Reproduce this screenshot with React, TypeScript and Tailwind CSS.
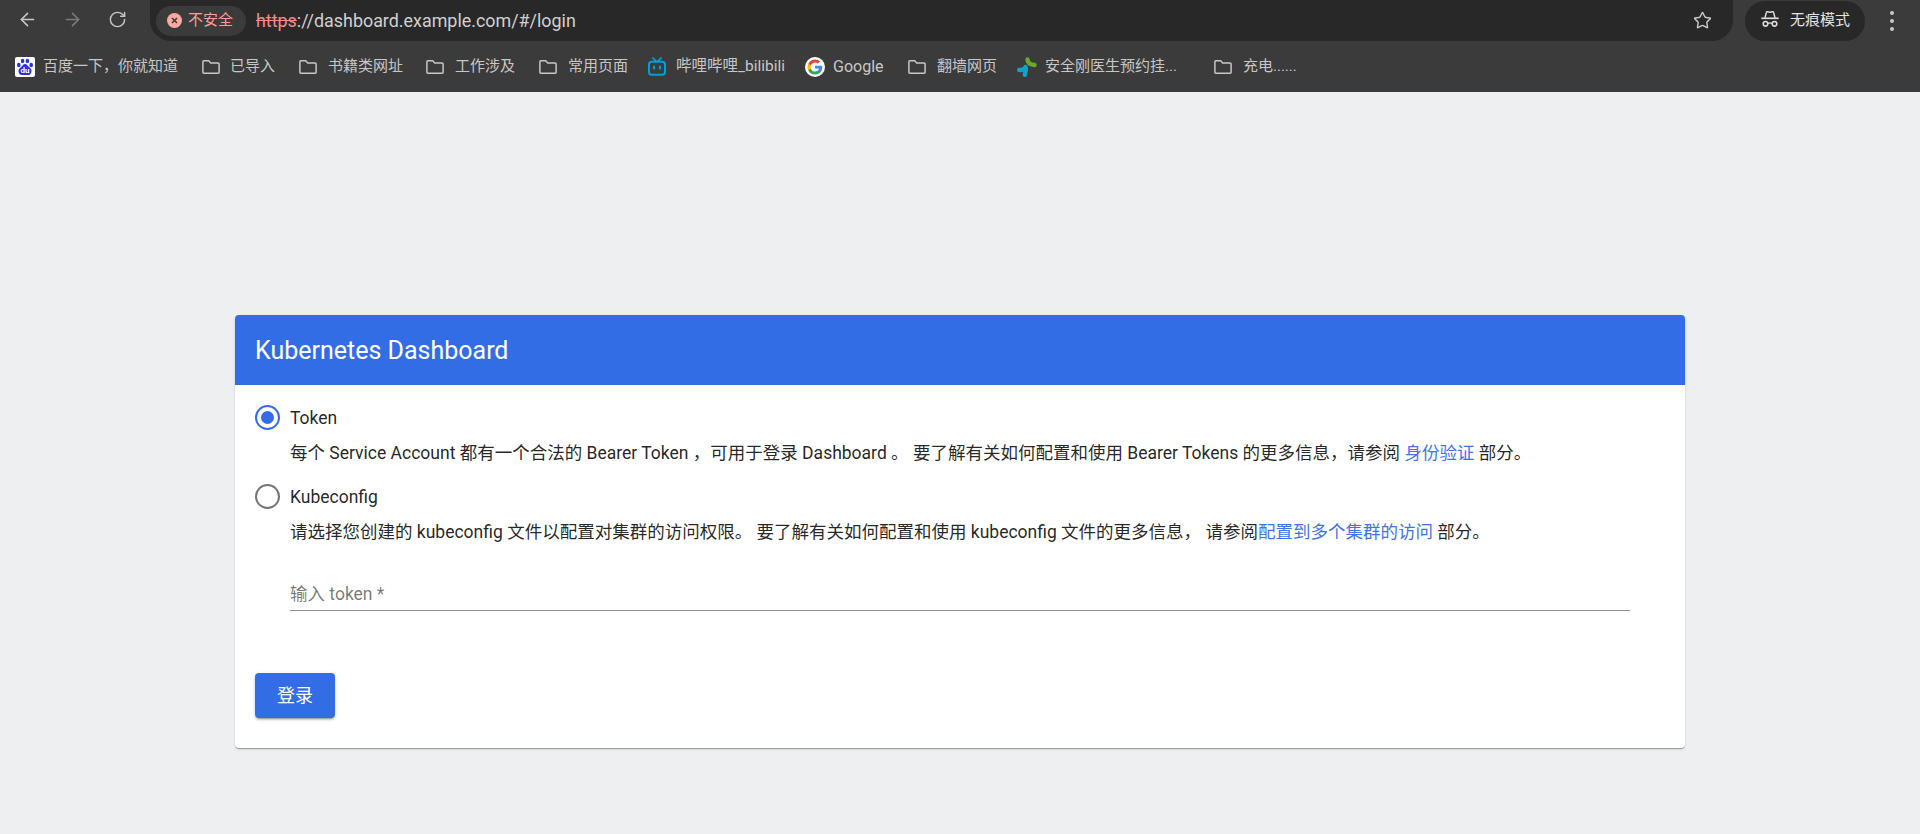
import { ArrowLeft, ArrowRight, RotateCw, Star } from "lucide-react";
import type { ReactNode } from "react";

const CJK = "font-['Roboto','Noto_Sans_CJK_SC',sans-serif]";

function FolderIcon() {
  return (
    <svg width="20" height="20" viewBox="0 0 20 20" fill="none" className="shrink-0">
      <path
        d="M2.800 3.800h4.900l2 2.200h7.500c.5 0 .9.400.9.900v8.400c0 .5-.4.900-.9.900H2.800c-.5 0-.9-.4-.9-.9V4.700c0-.5.400-.9.900-.9z"
        stroke="#c7c7c7"
        strokeWidth="1.500"
      />
    </svg>
  );
}

function BaiduIcon() {
  return (
    <svg width="20" height="20" viewBox="0 0 20 20" className="shrink-0">
      <rect width="20" height="20" rx="2" fill="#fff" />
      <g fill="#2932e1">
        <ellipse cx="3.800" cy="8" rx="1.800" ry="2.200" />
        <ellipse cx="7.600" cy="3.900" rx="1.800" ry="2.200" />
        <ellipse cx="12.400" cy="3.900" rx="1.800" ry="2.200" />
        <ellipse cx="16.200" cy="8" rx="1.800" ry="2.200" />
        <path d="M10 7c2 0 2.800 2 4.400 3.200 1.600 1.200 2.100 2.400 2.100 4 0 2.400-1.800 3.900-3.600 3.900H7c-1.900 0-3.500-1.500-3.500-3.800 0-1.700.8-2.900 2.300-4.100C7.400 9 8 7 10 7z" />
      </g>
      <text x="10" y="16.300" textAnchor="middle" fontSize="8" fontWeight="700" fill="#fff" fontFamily="Roboto, sans-serif">
        du
      </text>
    </svg>
  );
}

function BilibiliIcon() {
  return (
    <svg width="20" height="20" viewBox="0 0 20 20" fill="none" className="shrink-0">
      <path d="M5 1l3 3.200M13 1l-3 3.200" stroke="#00a1d6" strokeWidth="1.800" strokeLinecap="round" />
      <rect x="1" y="4.700" width="16" height="13" rx="2.800" stroke="#00a1d6" strokeWidth="2" />
      <path d="M6 9.700v1.800M12 9.700v1.800" stroke="#00a1d6" strokeWidth="2.200" strokeLinecap="round" />
    </svg>
  );
}

function GoogleIcon() {
  return (
    <svg width="20" height="20" viewBox="0 0 20 20" className="shrink-0">
      <circle cx="10" cy="10" r="10" fill="#fff" />
      <g transform="translate(2.500 2.500) scale(.625)">
        <path fill="#4285f4" d="M23.500 12.300c0-.8-.1-1.600-.2-2.300H12v4.500h6.500c-.3 1.500-1.100 2.800-2.400 3.600v3h3.800c2.300-2 3.600-5.100 3.600-8.800z" />
        <path fill="#34a853" d="M12 24c3.200 0 6-1.100 7.900-2.900l-3.800-3c-1.100.7-2.400 1.200-4.100 1.200-3.100 0-5.800-2.100-6.700-5H1.300v3.100C3.300 21.300 7.300 24 12 24z" />
        <path fill="#fbbc05" d="M5.300 14.300c-.5-1.500-.5-3.100 0-4.600V6.600h-4C-.4 9.900-.4 14.100 1.300 17.400l4-3.100z" />
        <path fill="#ea4335" d="M12 4.700c1.800 0 3.300.6 4.600 1.800l3.400-3.400C17.900 1.200 15.200 0 12 0 7.300 0 3.300 2.700 1.300 6.600l4 3.100c.9-2.900 3.600-5 6.700-5z" />
      </g>
    </svg>
  );
}

function ClinicIcon() {
  return (
    <svg width="20" height="20" viewBox="0 0 20 20" fill="none" className="shrink-0">
      <path d="M10.500 2.500C10.500 6 13 7.500 17.500 8" stroke="#6aa92a" strokeWidth="4.400" strokeLinecap="round" />
      <path d="M2.200 13C5 13 8 12.300 8.500 10M8.800 11C9.200 13.500 8.200 15.500 7.800 17.800" stroke="#0ea5c8" strokeWidth="4.400" strokeLinecap="round" />
    </svg>
  );
}

function IncognitoIcon() {
  return (
    <svg width="18" height="18" viewBox="0 0 18 18" fill="none" className="mb-[3px] shrink-0">
      <path d="M4 7.800L5.400 2.400c.1-.5.500-.8 1-.7L9 2.200l2.600-.5c.5-.1.900.2 1 .7L14 7.800" stroke="#dcdcdc" strokeWidth="1.500" />
      <path d="M.3 8.300h17.400" stroke="#dcdcdc" strokeWidth="1.700" />
      <circle cx="4.500" cy="13.800" r="2.300" stroke="#dcdcdc" strokeWidth="1.600" />
      <circle cx="13.500" cy="13.800" r="2.300" stroke="#dcdcdc" strokeWidth="1.600" />
      <path d="M6.800 13.300c1.400-.6 3-.6 4.400 0" stroke="#dcdcdc" strokeWidth="1.400" />
    </svg>
  );
}

function WarningIcon() {
  return (
    <svg width="15" height="15" viewBox="0 0 15 15" className="shrink-0">
      <circle cx="7.500" cy="7.500" r="7.500" fill="#f9a99f" />
      <path d="M5 5l5 5M10 5l-5 5" stroke="#3b3b3b" strokeWidth="1.600" />
    </svg>
  );
}

type Bookmark = { icon: ReactNode; label: string; className: string };

const BOOKMARKS: Bookmark[] = [
  { icon: <BaiduIcon />, label: "百度一下，你就知道", className: "w-[186px] gap-2" },
  { icon: <FolderIcon />, label: "已导入", className: "w-[97px] gap-[9px]" },
  { icon: <FolderIcon />, label: "书籍类网址", className: "w-[127px] gap-[10px]" },
  { icon: <FolderIcon />, label: "工作涉及", className: "w-[113px] gap-[10px]" },
  { icon: <FolderIcon />, label: "常用页面", className: "w-[110px] gap-[10px]" },
  { icon: <BilibiliIcon />, label: "哔哩哔哩_bilibili", className: "w-[157px] gap-2 text-[15.500px]" },
  { icon: <GoogleIcon />, label: "Google", className: "w-[102px] gap-2 text-base" },
  { icon: <FolderIcon />, label: "翻墙网页", className: "w-[110px] gap-[10px]" },
  { icon: <ClinicIcon />, label: "安全刚医生预约挂...", className: "w-[196px] gap-2" },
  { icon: <FolderIcon />, label: "充电......", className: "w-[90px] gap-[10px]" },
];

function Toolbar() {
  return (
    <header className={`h-[92px] shrink-0 bg-[#3b3b3b] ${CJK}`}>
      <div className="flex h-[41px] items-center">
        <div className="flex w-[150px] shrink-0 items-center pb-0.5">
          <ArrowLeft size={21} color="#c7c7c7" strokeWidth={1.8} className="ml-[17px]" />
          <ArrowRight size={21} color="#7a7a7a" strokeWidth={1.8} className="ml-[24px]" />
          <RotateCw size={19} color="#c7c7c7" strokeWidth={1.8} className="ml-[25px]" />
        </div>
        <div className="flex h-[41px] w-[1583px] items-center rounded-b-[21px] rounded-t-none bg-[#282828] pl-1.5">
          <div className="flex h-[30px] w-[90px] items-center gap-[6px] rounded-full bg-[#3b3b3b] pl-[11px] text-[15px] text-[#f6a196]">
            <WarningIcon />
            <span>不安全</span>
          </div>
          <div className="ml-2.5 flex-1 pt-0.5 text-[17.900px] text-[#d0d0d0]">
            <span className="text-[#f28b82] line-through">https</span>
            ://dashboard.example.com/#/login
          </div>
          <Star size={19} color="#c7c7c7" strokeWidth={1.8} className="mr-[21px]" />
        </div>
        <div className="ml-3 flex h-10 w-[120px] items-center gap-[11px] rounded-full bg-[#282828] pl-[16px] text-[15px] text-[#e3e3e3]">
          <IncognitoIcon />
          <span>无痕模式</span>
        </div>
        <div className="ml-[25px] flex flex-col gap-[4px]">
          <span className="h-1 w-1 rounded-full bg-[#c7c7c7]" />
          <span className="h-1 w-1 rounded-full bg-[#c7c7c7]" />
          <span className="h-1 w-1 rounded-full bg-[#c7c7c7]" />
        </div>
      </div>
      <nav className="flex h-[51px] items-center pl-[15px] text-[15px] text-[#c7c7c7]">
        {BOOKMARKS.map((b) => (
          <div key={b.label} className={`flex shrink-0 items-center whitespace-nowrap ${b.className}`}>
            {b.icon}
            <span>{b.label}</span>
          </div>
        ))}
      </nav>
    </header>
  );
}

function Radio({ checked, label }: { checked?: boolean; label: string }) {
  return (
    <div className="flex h-[25px] items-center gap-[10px]">
      <span
        className={`flex h-[25px] w-[25px] items-center justify-center rounded-full border-2 ${
          checked ? "border-[#326de6]" : "border-[#757575]"
        }`}
      >
        {checked && <span className="h-[13px] w-[13px] rounded-full bg-[#326de6]" />}
      </span>
      <span className="pt-0.5 text-[17.500px]">{label}</span>
    </div>
  );
}

export default function App() {
  return (
    <div className={`flex min-h-[834px] flex-col bg-[#eeeff1] ${CJK}`}>
      <Toolbar />
      <main className="px-[235px] pt-[223px]">
        <div className="overflow-hidden rounded bg-white text-[#000000de] shadow-[0_2px_1px_-1px_rgba(0,0,0,0.2),0_1px_1px_0_rgba(0,0,0,0.14),0_1px_3px_0_rgba(0,0,0,0.12)]">
          <div className="flex h-[70px] items-center bg-[#326de6] pt-0.5 pl-5 text-[25px] text-white">
            Kubernetes Dashboard
          </div>
          <div className="pt-5 pr-[55px] pb-[30px] pl-5">
            <Radio checked label="Token" />
            <p className="mt-[11px] mb-[19px] ml-[35px] text-[17.500px] leading-6">
              每个 Service Account 都有一个合法的 Bearer Token ，可用于登录 Dashboard 。 要了解有关如何配置和使用 Bearer Tokens 的更多信息，请参阅{" "}
              <a className="text-[#3f74e8]">身份验证</a> 部分。
            </p>
            <Radio label="Kubeconfig" />
            <p className="mt-[11px] ml-[35px] text-[17.500px] leading-6">
              请选择您创建的 kubeconfig 文件以配置对集群的访问权限。 要了解有关如何配置和使用 kubeconfig 文件的更多信息， 请参阅
              <a className="text-[#3f74e8]">配置到多个集群的访问</a> 部分。
            </p>
            <input
              placeholder="输入 token *"
              className="mt-[33px] ml-[35px] block h-[34px] w-[1340px] border-b border-[#8f8f8f] text-[17.500px] outline-none placeholder:text-[#0000008a]"
            />
            <button className="mt-[62px] h-[45px] w-20 rounded bg-[#326de6] text-lg text-white shadow-[0_3px_1px_-2px_rgba(0,0,0,0.2),0_2px_2px_0_rgba(0,0,0,0.14),0_1px_5px_0_rgba(0,0,0,0.12)]">
              登录
            </button>
          </div>
        </div>
      </main>
    </div>
  );
}
